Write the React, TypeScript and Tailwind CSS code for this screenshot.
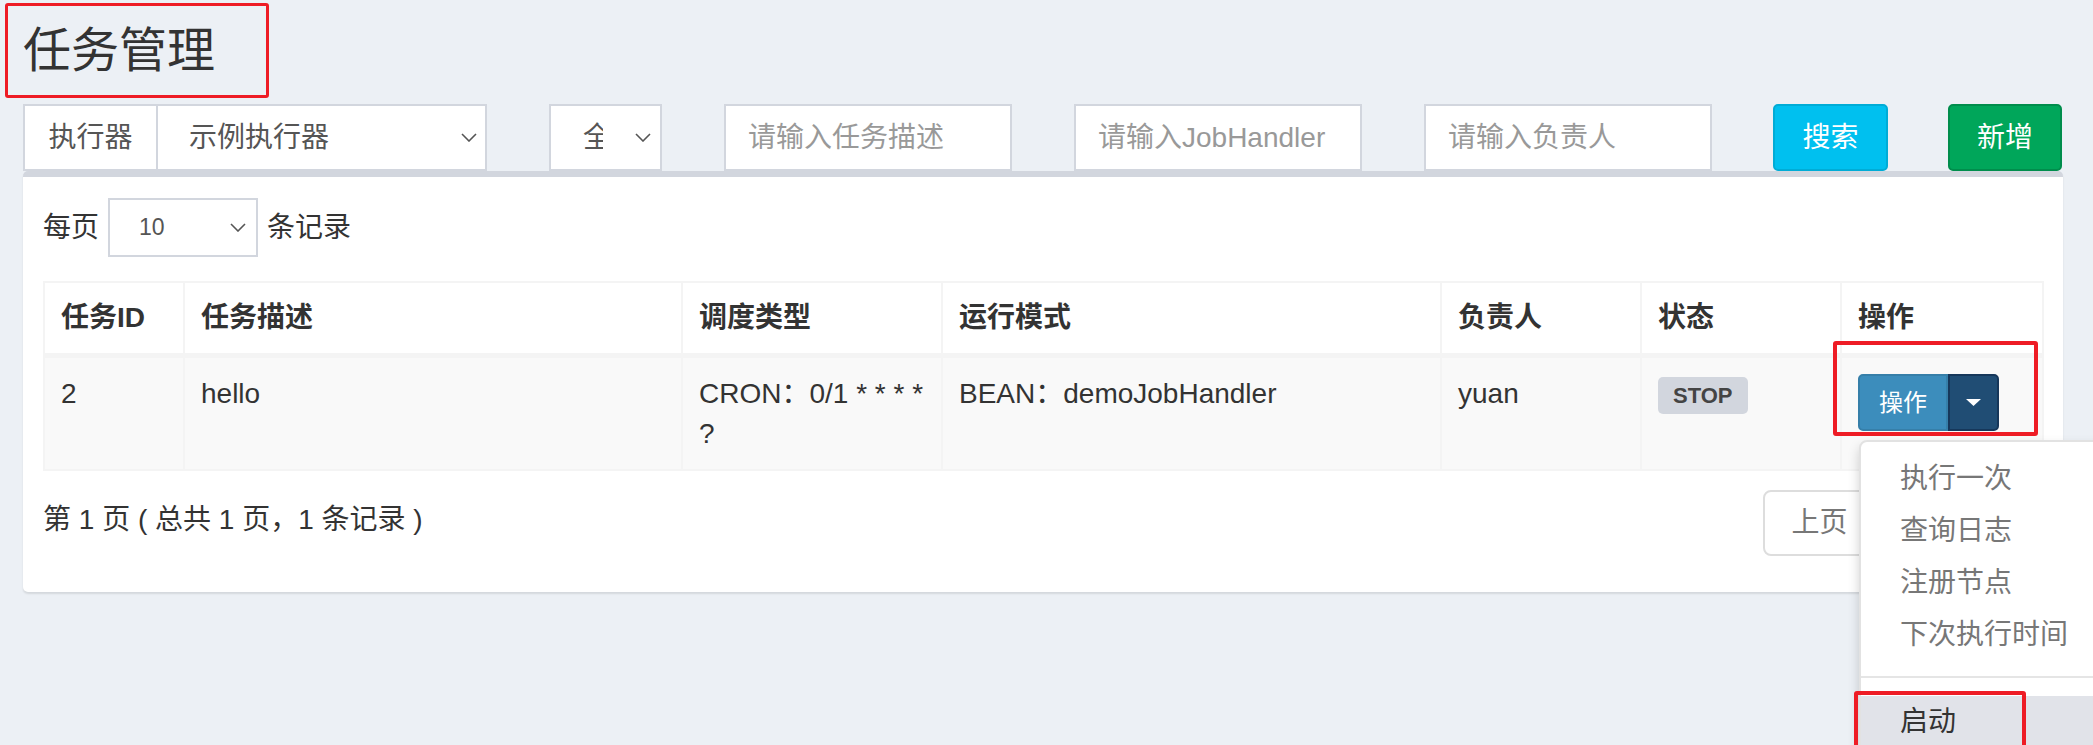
import type { ReactNode } from "react";

function Chevron({ className = "" }: { className?: string }) {
  return (
    <svg
      viewBox="0 0 16 9"
      className={"h-[9px] w-[16px] shrink-0 " + className}
      fill="none"
      stroke="#555"
      strokeWidth="1.6"
    >
      <polyline points="1,1 8,8 15,1" />
    </svg>
  );
}

function FakeSelect({
  children,
  className = "",
}: {
  children: ReactNode;
  className?: string;
}) {
  return (
    <div
      className={
        "flex items-center justify-between border-2 border-[#d2d6de] bg-white text-[#555] " +
        className
      }
    >
      {children}
    </div>
  );
}

const columns = [
  { title: "任务ID", w: "w-[140px]" },
  { title: "任务描述", w: "w-[498px]" },
  { title: "调度类型", w: "w-[260px]" },
  { title: "运行模式", w: "w-[499px]" },
  { title: "负责人", w: "w-[200px]" },
  { title: "状态", w: "w-[200px]" },
  { title: "操作", w: "w-[202px]" },
];

const menuItems = ["执行一次", "查询日志", "注册节点", "下次执行时间"];

function ActionButton() {
  return (
    <div className="relative inline-flex">
      <span className="flex h-[57px] items-center rounded-l-[5px] border-2 border-[#367fa9] bg-[#3c8dbc] px-[19px] text-[24px] leading-none text-white">
        操作
      </span>
      <span className="flex h-[57px] w-[51px] items-center justify-center rounded-r-[5px] border-2 border-[#16375a] bg-[#204d74]">
        <svg viewBox="0 0 15 7" className="h-[7px] w-[15px]">
          <polygon points="0,0 15,0 7.5,7" fill="#fff" />
        </svg>
      </span>
      {/* annotation box */}
      <div className="pointer-events-none absolute -left-[25px] -top-[33px] h-[95px] w-[205px] rounded-[3px] border-[4px] border-[#ee1c25]" />

      <div className="absolute left-[1px] top-[66px] z-10 w-[280px] rounded-[8px] border-2 border-[#e2e2e2] bg-white pb-[10px] pt-[11px] text-[28px] font-normal leading-[40px] shadow-[0_6px_12px_rgba(0,0,0,0.175)]">
        {menuItems.map((m) => (
          <div key={m} className="whitespace-nowrap px-[39px] py-[6px] text-[#777]">
            {m}
          </div>
        ))}
        <div className="mb-[18px] mt-[15px] h-[2px] bg-[#e5e5e5]" />
        <div className="relative whitespace-nowrap bg-[#e1e3e9] px-[39px] py-[6px] text-[#333]">
          启动
          <div className="pointer-events-none absolute -left-[7px] -top-[5px] h-[90px] w-[172px] rounded-[3px] border-[4px] border-[#ee1c25]" />
        </div>
      </div>
    </div>
  );
}

export default function App() {
  return (
    <div className="relative h-[745px] w-[2093px] overflow-hidden bg-[#ecf0f5] font-['Liberation_Sans','Noto_Sans_CJK_SC',sans-serif] text-[#333]">
      {/* page title, with annotation border */}
      <div className="ml-[5px] mt-[3px] flex h-[95px] w-[264px] items-center rounded-[3px] border-[3px] border-[#ee1c25] pl-[15px] text-[48px] leading-none text-[#333]">
        任务管理
      </div>

      {/* filter bar */}
      <div className="mt-[6px] flex h-[67px] pl-[23px] text-[28px]">
        <div className="flex w-[464px]">
          <div className="flex w-[135px] items-center justify-center border-2 border-[#d2d6de] bg-white text-[#555]">
            执行器
          </div>
          <FakeSelect className="flex-1 border-l-0 pl-[31px] pr-[8px]">
            <span>示例执行器</span>
            <Chevron />
          </FakeSelect>
        </div>
        <FakeSelect className="ml-[62px] w-[113px] pl-[32px] pr-[9px]">
          <span className="w-[20px] overflow-hidden whitespace-nowrap">全部</span>
          <Chevron />
        </FakeSelect>
        <input
          className="ml-[62px] w-[288px] border-2 border-[#d2d6de] bg-white px-[22px] text-[#555] outline-none placeholder:text-[#999]"
          placeholder="请输入任务描述"
        />
        <input
          className="ml-[62px] w-[288px] border-2 border-[#d2d6de] bg-white px-[22px] text-[#555] outline-none placeholder:text-[#999]"
          placeholder="请输入JobHandler"
        />
        <input
          className="ml-[62px] w-[288px] border-2 border-[#d2d6de] bg-white px-[22px] text-[#555] outline-none placeholder:text-[#999]"
          placeholder="请输入负责人"
        />
        <button className="ml-[61px] w-[115px] rounded-[5px] border-2 border-[#00acd6] bg-[#00c0ef] text-white">
          搜索
        </button>
        <button className="ml-[60px] w-[114px] rounded-[5px] border-2 border-[#008d4c] bg-[#00a65a] text-white">
          新增
        </button>
      </div>

      {/* list box */}
      <div className="ml-[23px] w-[2040px] rounded-[5px] border-t-[6px] border-[#d2d6de] bg-white px-[20px] pb-[36px] pt-[21px] text-[28px] shadow-[0_2px_2px_rgba(0,0,0,0.1)]">
        <div className="flex h-[59px] items-center gap-[9px]">
          <span>每页</span>
          <FakeSelect className="h-[59px] w-[150px] pl-[29px] pr-[10px] text-[23px]">
            <span>10</span>
            <Chevron />
          </FakeSelect>
          <span>条记录</span>
        </div>

        <table className="mt-[24px] w-[1999px] table-fixed border-collapse border-2 border-[#f4f4f4] leading-[40px]">
          <colgroup>
            {columns.map((c) => (
              <col key={c.title} className={c.w} />
            ))}
          </colgroup>
          <thead>
            <tr className="bg-white">
              {columns.map((c) => (
                <th
                  key={c.title}
                  className="border-2 border-b-[5px] border-[#f4f4f4] px-[16px] py-[15px] text-left font-bold"
                >
                  {c.title}
                </th>
              ))}
            </tr>
          </thead>
          <tbody>
            <tr className="bg-[#f9f9f9] align-top">
              <td className="border-2 border-[#f4f4f4] px-[16px] pb-[15px] pt-[16px]">2</td>
              <td className="border-2 border-[#f4f4f4] px-[16px] pb-[15px] pt-[16px]">hello</td>
              <td className="border-2 border-[#f4f4f4] px-[16px] pb-[15px] pt-[16px]">
                CRON：0/1 * * * *
                <br />?
              </td>
              <td className="border-2 border-[#f4f4f4] px-[16px] pb-[15px] pt-[16px]">
                BEAN：demoJobHandler
              </td>
              <td className="border-2 border-[#f4f4f4] px-[16px] pb-[15px] pt-[16px]">yuan</td>
              <td className="border-2 border-[#f4f4f4] px-[16px] pb-[15px] pt-[16px]">
                <span className="mt-[3px] inline-block rounded-[5px] bg-[#d2d6de] px-[15px] py-[6px] text-[22px] font-bold leading-[25px] text-[#444]">
                  STOP
                </span>
              </td>
              <td className="border-2 border-[#f4f4f4] px-[16px] pb-[15px] pt-[16px]">
                <ActionButton />
              </td>
            </tr>
          </tbody>
        </table>

        <div className="mt-[19px] flex items-start justify-between">
          <div className="pt-[10px] leading-[40px]">第 1 页 ( 总共 1 页，1 条记录 )</div>
          <div className="flex h-[66px] leading-[62px]">
            <span className="rounded-l-[8px] border-2 border-[#ddd] bg-white px-[26px] text-[#777]">
              上页
            </span>
            <span className="-ml-[2px] border-2 border-[#337ab7] bg-[#337ab7] px-[20px] text-white">
              1
            </span>
            <span className="-ml-[2px] rounded-r-[8px] border-2 border-[#ddd] bg-white px-[26px] text-[#777]">
              下页
            </span>
          </div>
        </div>
      </div>
    </div>
  );
}
